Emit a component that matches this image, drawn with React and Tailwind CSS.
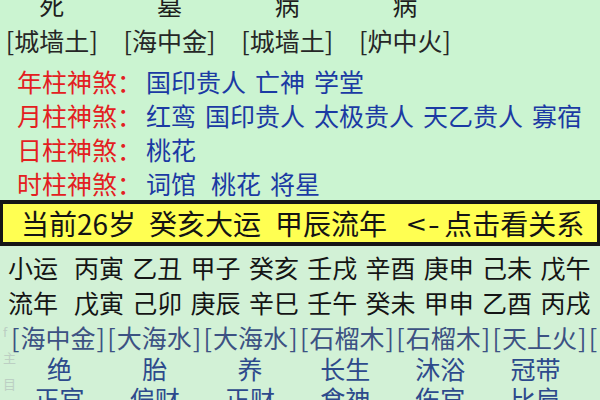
export default function App() {
  const top1 = ['死', '墓', '病', '病'];
  const top2 = ['[城墙土]', '[海中金]', '[城墙土]', '[炉中火]'];
  const shensha = [
    ['年柱神煞：', ['国印贵人', '亡神', '学堂']],
    ['月柱神煞：', ['红鸾', '国印贵人', '太极贵人', '天乙贵人', '寡宿']],
    ['日柱神煞：', ['桃花']],
    ['时柱神煞：', ['词馆', '桃花', '将星']],
  ];
  const xiaoyun = ['丙寅', '乙丑', '甲子', '癸亥', '壬戌', '辛酉', '庚申', '己未', '戊午'];
  const liunian = ['戊寅', '己卯', '庚辰', '辛巳', '壬午', '癸未', '甲申', '乙酉', '丙戌'];
  const nayin = ['海中金', '大海水', '大海水', '石榴木', '石榴木', '天上火'];
  const changsheng = ['绝', '胎', '养', '长生', '沐浴', '冠带'];
  const shishen = ['正官', '偏财', '正财', '食神', '伤官', '比肩'];

  return (
    <div className="relative w-[600px] h-[400px] overflow-hidden font-['Noto_Sans_CJK_SC','Noto_Sans',sans-serif] bg-[#d2f1d6]">
      <div className="bg-[#cbf4d1]">
        <div className="grid grid-cols-[repeat(4,117.7px)] ml-[-7px] mt-[-14px] h-[36px] leading-[36px] text-[25px] text-[#1e1e1e]">
          {top1.map((t, i) => (
            <div key={i} className="text-center">{t}</div>
          ))}
        </div>
        <div className="grid grid-cols-[repeat(4,117.7px)] ml-[-7px] h-[36px] leading-[36px] text-[25px] text-[#262626]">
          {top2.map((t, i) => (
            <div key={i} className="flex justify-center">
              <span className="flex w-[92px] justify-between">
                <span>[</span>
                <span>{t.slice(1, -1)}</span>
                <span>]</span>
              </span>
            </div>
          ))}
        </div>
        <div className="mt-[6px] flex flex-col">
          {shensha.map(([label, words], r) => (
            <div key={r} className="flex h-[34px] leading-[34px] text-[25px] pl-[17px]">
              <span className="w-[129px] shrink-0 text-[#e3201f]">{label}</span>
              <div className="flex gap-[9px] text-[#1b3aa3]">
                {words.map((w, i) => (
                  <span key={i} className={r === 3 && i === 1 ? 'ml-[6px]' : ''}>{w}</span>
                ))}
              </div>
            </div>
          ))}
        </div>
      </div>

      <div className="flex items-center h-[46px] border-y-4 border-x-[3px] border-[#161616] bg-[#ffff52] text-[28px] leading-none text-[#141414] pl-[18px] whitespace-nowrap">
        <span>当前26岁</span>
        <span className="ml-[13px]">癸亥大运</span>
        <span className="ml-[14px]">甲辰流年</span>
        <span className="ml-[20px] inline-block w-[37px] tracking-[2px] scale-x-[1.2] origin-left">&lt;-</span>
        <span>点击看关系</span>
      </div>

      <div className="mt-[4px]">
        <div className="flex h-[35px] leading-[35px] text-[25px] text-[#151515] pl-[8px] whitespace-nowrap">
          <span className="w-[66px] shrink-0">小运</span>
          {xiaoyun.map((w, i) => (
            <span key={i} className="w-[58.3px] shrink-0">{w}</span>
          ))}
        </div>
        <div className="flex h-[35px] leading-[35px] text-[25px] text-[#151515] pl-[8px] whitespace-nowrap">
          <span className="w-[66px] shrink-0">流年</span>
          {liunian.map((w, i) => (
            <span key={i} className="w-[58.3px] shrink-0">{w}</span>
          ))}
        </div>
        <div className="grid grid-cols-[repeat(7,96.3px)] pl-[11px] h-[34px] leading-[34px] text-[25px] text-[#3c5283] whitespace-nowrap">
          {nayin.map((w, i) => (
            <span key={i} className="flex w-[94px] justify-between">
              <span>[</span>
              <span>{w}</span>
              <span>]</span>
            </span>
          ))}
          <span className="text-left">[</span>
        </div>
        <div className="grid grid-cols-[repeat(6,95.2px)] pl-[12px] h-[28px] leading-[28px] text-[25px] text-[#2d4a8c] whitespace-nowrap">
          {changsheng.map((w, i) => (
            <span key={i} className="text-center">{w}</span>
          ))}
        </div>
        <div className="grid grid-cols-[repeat(6,95.2px)] pl-[12px] h-[32px] leading-[32px] text-[25px] text-[#2d4a8c] whitespace-nowrap">
          {shishen.map((w, i) => (
            <span key={i} className="text-center">{w}</span>
          ))}
        </div>
      </div>

      <div className="absolute left-[3px] top-[324px] flex flex-col gap-[10px] text-[13px] leading-[16px] text-[#bccfc3]">
        <span>f</span>
        <span>主</span>
        <span>目</span>
      </div>
    </div>
  );
}
